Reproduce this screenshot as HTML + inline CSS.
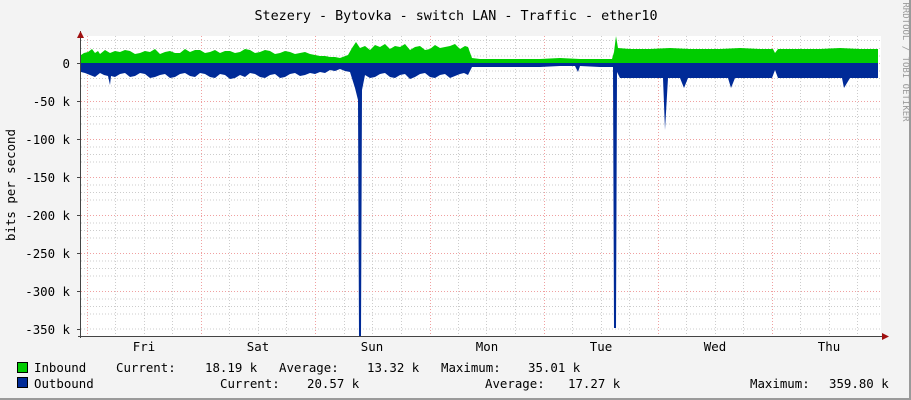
<!DOCTYPE html>
<html><head><meta charset="utf-8"><style>
html,body{margin:0;padding:0;width:911px;height:400px;overflow:hidden;background:#f3f3f3}
svg{display:block}
text{font-family:"DejaVu Sans Mono","Liberation Mono",monospace;font-size:12.4px;fill:#000}
</style></head><body>
<svg width="911" height="400" viewBox="0 0 911 400" xmlns="http://www.w3.org/2000/svg">
<rect x="0" y="0" width="911" height="400" fill="#f3f3f3"/>
<rect x="909" y="0" width="2" height="400" fill="#9a9a9a"/>
<rect x="0" y="398" width="911" height="2" fill="#9a9a9a"/>
<rect x="81" y="36" width="800" height="300" fill="#fff"/>
<g stroke="#cccccc" stroke-width="1" stroke-dasharray="1,2">
<path d="M81 40.5H881M81 48.5H881M81 56H881M81 71H881M81 78.5H881M81 86H881M81 109H881M81 116.5H881M81 124H881M81 147H881M81 154.5H881M81 162H881M81 185H881M81 192.5H881M81 200H881M81 223H881M81 230.5H881M81 238H881M81 261H881M81 268.5H881M81 276H881M81 299H881M81 306.5H881M81 314H881M81 329H881"/>
<path d="M115.5 36V336M144.5 36V336M172.5 36V336M229.5 36V336M258.5 36V336M286.5 36V336M344.5 36V336M372.5 36V336M401.5 36V336M458.5 36V336M486.5 36V336M515.5 36V336M572.5 36V336M601.5 36V336M629.5 36V336M686.5 36V336M715.5 36V336M743.5 36V336M800.5 36V336M829.5 36V336M857.5 36V336"/>
</g>
<g stroke="#f0a0a0" stroke-width="1" stroke-dasharray="1,2">
<path d="M81 63.5H881M81 101.5H881M81 139.5H881M81 177.5H881M81 215.5H881M81 253.5H881M81 291.5H881"/>
<path d="M87.5 36V336M201.5 36V336M315.5 36V336M430.5 36V336M544.5 36V336M658.5 36V336M772.5 36V336"/>
</g>
<path fill="#00cc00" d="M81 55L84 53L88 52L92 49L95 53L98 51L100 54L105 50L110 53L115 51L120 52L125 50L130 51L135 54L140 53L145 51L150 52L155 49L160 54L165 52L170 51L175 53L180 53L185 49L190 52L195 50L200 50L205 53L210 52L215 50L220 53L225 51L230 51L235 53L240 52L245 49L250 50L255 53L260 52L265 50L270 51L275 54L280 53L285 51L290 52L295 54L300 53L305 52L310 54L315 55L320 56L325 56L330 57L335 57L340 58L348 55L352 48L356 42L360 48L365 46L370 50L375 45L380 47L385 44L390 49L395 46L400 47L405 44L410 50L415 47L420 46L425 50L430 49L435 45L440 48L445 47L450 46L455 44L460 49L465 46L468 47L472 58L480 59L500 59L520 59L540 59L560 58L580 59L600 59L612 59L614 52L616 36L618 48L630 49L650 49L670 48L690 49L700 49L720 49L740 48L760 49L773 49L775 53L778 49L800 49L820 49L840 48L860 49L878 49L878 63L81 63Z"/>
<path fill="#002a97" d="M81 63L878 63L878 78L850 78L844 88L842 78L800 78L778 78L775 70L772 78L735 78L731 88L728 78L688 78L684 88L680 78L668 78L665 130L663 78L620 78L617 72L616 328L614 328L613 67L600 67L580 66L578 72L575 66L560 66L540 67L520 67L500 67L472 67L468 75L464 73L460 74L455 76L450 78L445 74L440 75L435 78L430 77L425 73L420 74L415 77L410 79L405 74L400 75L395 78L390 77L385 73L380 74L375 77L370 78L365 75L362 90L361 336L359 336L358 100L355 88L350 72L345 71L340 69L335 71L330 70L325 73L320 72L315 74L310 73L305 75L300 76L295 73L290 74L285 77L280 78L275 74L270 75L265 78L260 77L255 74L250 73L245 77L240 75L235 78L230 79L225 75L220 74L215 78L210 77L205 74L200 73L195 77L190 76L185 73L180 74L175 77L170 78L165 74L160 75L155 77L150 78L145 74L140 73L135 76L130 77L125 73L120 74L115 77L111 76L110 85L108 76L104 75L100 73L95 77L90 75L85 73L81 72Z"/>
<path d="M80.5 31V338M78 336.5H886" stroke="#444" stroke-width="1"/>
<path d="M77 38L80.5 31L84 38Z" fill="#a01010"/>
<path d="M882 333L889 336.5L882 340Z" fill="#a01010"/>
<g stroke="#444"><path d="M77 63.5H81M77 101.5H81M77 139.5H81M77 177.5H81M77 215.5H81M77 253.5H81M77 291.5H81M77 329.5H81"/></g>
<text x="456" y="20" text-anchor="middle" style="font-size:13.4px">Stezery - Bytovka - switch LAN - Traffic - ether10</text>
<g text-anchor="end">
<text x="70" y="68">0</text>
<text x="70" y="106">-50 k</text>
<text x="70" y="144">-100 k</text>
<text x="70" y="182">-150 k</text>
<text x="70" y="220">-200 k</text>
<text x="70" y="258">-250 k</text>
<text x="70" y="296">-300 k</text>
<text x="70" y="334">-350 k</text>
</g>
<text transform="translate(15,185) rotate(-90)" text-anchor="middle">bits per second</text>
<text transform="translate(903,62) rotate(90)" text-anchor="middle" style="font-size:9px;fill:#999">RRDTOOL / TOBI OETIKER</text>
<g text-anchor="middle">
<text x="144" y="351">Fri</text><text x="258" y="351">Sat</text><text x="372" y="351">Sun</text><text x="487" y="351">Mon</text><text x="601" y="351">Tue</text><text x="715" y="351">Wed</text><text x="829" y="351">Thu</text>
</g>
<rect x="17.5" y="362.5" width="10" height="10" fill="#00cc00" stroke="#000"/>
<rect x="17.5" y="377.5" width="10" height="10" fill="#002a97" stroke="#000"/>
<text x="34" y="372">Inbound</text>
<text x="116" y="372">Current:</text>
<text x="205" y="372">18.19 k</text>
<text x="279" y="372">Average:</text>
<text x="367" y="372">13.32 k</text>
<text x="441" y="372">Maximum:</text>
<text x="528" y="372">35.01 k</text>
<text x="34" y="388">Outbound</text>
<text x="220" y="388">Current:</text>
<text x="307" y="388">20.57 k</text>
<text x="485" y="388">Average:</text>
<text x="568" y="388">17.27 k</text>
<text x="750" y="388">Maximum:</text>
<text x="829" y="388">359.80 k</text>
</svg>
</body></html>
